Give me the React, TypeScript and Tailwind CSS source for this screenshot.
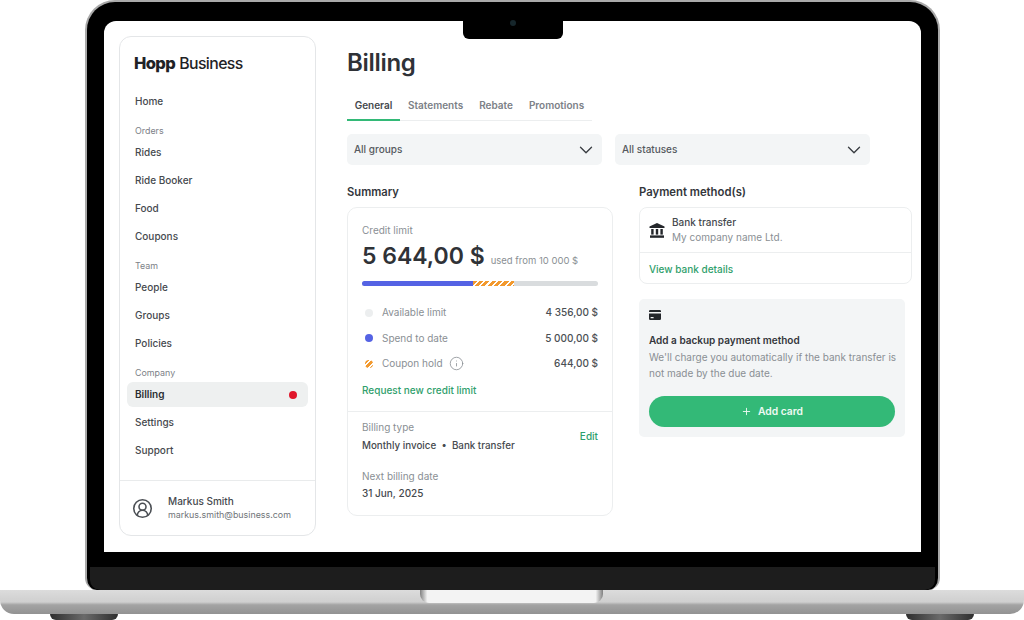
import { ChevronDown, Plus, Info, CircleUserRound } from 'lucide-react';

const NAV = [
  { items: ['Home'] },
  { label: 'Orders', items: ['Rides', 'Ride Booker', 'Food', 'Coupons'] },
  { label: 'Team', items: ['People', 'Groups', 'Policies'] },
  { label: 'Company', items: ['Billing', 'Settings', 'Support'] }
];

const STRIPES = 'bg-[repeating-linear-gradient(135deg,#f2992e_0,#f2992e_3px,#ffffff_3px,#ffffff_4.5px)]';

function BankIcon() {
  return (
    <svg viewBox="0 0 16 15" className="w-[16px] h-[15px] shrink-0" fill="#24272b">
      <path d="M8 0 15.5 3.6V5H.5V3.6L8 0Z" />
      <rect x="2.2" y="6" width="2.4" height="5.6" />
      <rect x="6.8" y="6" width="2.4" height="5.6" />
      <rect x="11.4" y="6" width="2.4" height="5.6" />
      <rect x="1" y="12.4" width="14" height="2.4" />
    </svg>
  );
}

function CardIcon() {
  return (
    <svg viewBox="0 0 12 10" className="w-[12px] h-[10px] block" fill="#24272b">
      <path d="M1.2 0h9.6A1.2 1.2 0 0 1 12 1.2V2H0v-.8A1.2 1.2 0 0 1 1.2 0Z" />
      <path d="M0 3.6h12v5.2A1.2 1.2 0 0 1 10.8 10H1.2A1.2 1.2 0 0 1 0 8.8V3.6Zm1.6 3.4v1.2h3V7h-3Z" fillRule="evenodd" />
    </svg>
  );
}

function Sidebar() {
  return (
    <aside className="w-[197px] h-[500px] shrink-0 flex flex-col border border-[#e4e6e8] rounded-[12px]">
      <div className="h-[52px] pl-[14px] pt-[15px] text-[16.5px] leading-[22px] tracking-[-0.6px] text-[#1f2226] whitespace-nowrap">
        <span className="font-extrabold">Hopp</span>{' '}
        <span className="font-medium text-[15.8px]">Business</span>
      </div>
      <nav className="flex-1 px-[7px]">
        {NAV.map((group) => (
          <div key={group.items[0]}>
            {group.label && (
              <div className="h-[23px] pl-[8px] pt-[7px] text-[8.9px] leading-[14px] text-[#7c8187]">{group.label}</div>
            )}
            <div className="flex flex-col gap-[3px] mb-[3px]">
              {group.items.map((item) => {
                const active = item === 'Billing';
                return (
                  <div
                    key={item}
                    className={`h-[25px] pl-[8px] pr-[11px] flex items-center justify-between rounded-[6px] text-[10px] ${
                      active ? 'bg-[#eef0f0] font-semibold text-[#2a2d31]' : 'font-medium text-[#45494e]'
                    }`}
                  >
                    {item}
                    {active && <span className="w-[8px] h-[8px] rounded-full bg-[#e0162b]" />}
                  </div>
                );
              })}
            </div>
          </div>
        ))}
      </nav>
      <div className="h-[55px] border-t border-[#e9ebec] flex items-center pl-[12px] gap-[15px]">
        <CircleUserRound className="w-[21px] h-[21px] text-[#4b4f54]" strokeWidth={1.8} />
        <div>
          <div className="text-[10px] leading-[14px] font-medium text-[#45494e]">Markus Smith</div>
          <div className="text-[8.9px] leading-[14px] text-[#6f7479]">markus.smith@business.com</div>
        </div>
      </div>
    </aside>
  );
}

function Select({ label }: { label: string }) {
  return (
    <div className="w-[255px] h-[31px] pl-[7px] pr-[5px] flex items-center justify-between bg-[#f3f5f6] rounded-[5px] text-[10px] font-medium text-[#55595e]">
      {label}
      <ChevronDown className="w-[22px] h-[22px] text-[#3c4045]" strokeWidth={1.5} />
    </div>
  );
}

function LimitRow({ dot, label, value, info }: { dot: string; label: string; value: string; info?: boolean }) {
  return (
    <div className="h-[25.5px] flex items-center text-[10px]">
      <span className={`w-[8px] h-[8px] rounded-full ml-[3px] mr-[9px] ${dot}`} />
      <span className="text-[#8a8f94]">{label}</span>
      {info && <Info className="w-[15px] h-[15px] ml-[6px] text-[#8a8f94]" strokeWidth={1.3} />}
      <span className="ml-auto font-medium text-[#4b4f54]">{value}</span>
    </div>
  );
}

function Summary() {
  return (
    <section className="w-[266px] shrink-0">
      <h2 className="h-[19px] text-[11.2px] leading-[19px] font-semibold text-[#33363b]">Summary</h2>
      <div className="mt-[5px] h-[309px] border border-[#eceeef] rounded-[10px]">
        <div className="px-[14px] pt-[15px] h-[204px] border-b border-[#eceeef]">
          <div className="text-[10px] leading-[14px] text-[#8a8f94]">Credit limit</div>
          <div className="mt-[3px] h-[32px] flex items-baseline gap-[6px] whitespace-nowrap">
            <span className="text-[23px] leading-[32px] font-semibold text-[#2f3237]">5 644,00 $</span>
            <span className="text-[9.5px] text-[#8a8f94]">used from 10 000 $</span>
          </div>
          <div className="mt-[9px] h-[5px] rounded-full bg-[#d9dcde] flex overflow-hidden">
            <div className="w-[111px] bg-[#5563e4]" />
            <div className={`w-[41px] ${STRIPES}`} />
          </div>
          <div className="mt-[14px]">
            <LimitRow dot="bg-[#eceeef]" label="Available limit" value="4 356,00 $" />
            <LimitRow dot="bg-[#5563e4]" label="Spend to date" value="5 000,00 $" />
            <LimitRow dot={STRIPES} label="Coupon hold" value="644,00 $" info />
          </div>
          <div className="mt-[6px] text-[10px] leading-[14px] font-medium text-[#2fa06c]">Request new credit limit</div>
        </div>
        <div className="px-[14px] pt-[8px] relative text-[10px]">
          <div className="leading-[15px] text-[#8a8f94]">Billing type</div>
          <div className="mt-[3px] leading-[15px] text-[9.8px] font-medium text-[#45494e]">Monthly invoice&nbsp; •&nbsp; Bank transfer</div>
          <div className="absolute right-[14px] top-[17px] font-medium text-[#2fa06c]">Edit</div>
          <div className="mt-[16px] leading-[15px] text-[#8a8f94]">Next billing date</div>
          <div className="mt-[2px] leading-[15px] font-medium text-[#45494e]">31 Jun, 2025</div>
        </div>
      </div>
    </section>
  );
}

function Payment() {
  return (
    <section className="w-[273px] shrink-0 ml-[26px]">
      <h2 className="h-[19px] text-[11.3px] leading-[19px] font-semibold text-[#33363b]">Payment method(s)</h2>
      <div className="mt-[5px] h-[77px] border border-[#eceeef] rounded-[8px]">
        <div className="h-[45px] border-b border-[#eceeef] flex items-center pl-[9px] gap-[7px]">
          <BankIcon />
          <div className="text-[10px] leading-[15.5px]">
            <div className="font-medium text-[#45494e]">Bank transfer</div>
            <div className="text-[#8a8f94]">My company name Ltd.</div>
          </div>
        </div>
        <div className="pl-[9px] pt-[9px] text-[10px] leading-[14px] font-medium text-[#2fa06c]">View bank details</div>
      </div>
      <div className="mt-[15px] w-[266px] h-[138px] bg-[#f3f5f6] rounded-[5px] pl-[10px] pr-[4px] pt-[11px]">
        <CardIcon />
        <div className="mt-[12px] text-[10px] leading-[16px] font-semibold text-[#33363b]">Add a backup payment method</div>
        <p className="mt-[1px] text-[10px] leading-[16px] text-[#8a8f94]">
          We'll charge you automatically if the bank transfer is not made by the due date.
        </p>
        <div className="mt-[15px] h-[31px] w-[246px] rounded-full bg-[#33b977] flex items-center justify-center gap-[6px] text-[10.3px] font-semibold text-[#eefaf3]">
          <Plus className="w-[11px] h-[11px]" strokeWidth={2} />
          Add card
        </div>
      </div>
    </section>
  );
}

function BillingPage() {
  return (
    <main className="flex-1 ml-[31px] min-w-0">
      <h1 className="h-[32px] mt-[11px] text-[24px] leading-[32px] font-semibold tracking-[-0.3px] text-[#2f3237]">Billing</h1>
      <div className="mt-[19px] w-[245px] h-[23px] border-b border-[#eceeef] flex text-[10px] font-semibold text-[#7c8187]">
        <div className="w-[53px] h-[23px] border-b-2 border-[#33b977] text-center text-[#45494e] leading-[15px]">General</div>
        <div className="ml-[8px] leading-[15px]">Statements</div>
        <div className="ml-[16px] leading-[15px]">Rebate</div>
        <div className="ml-[16px] leading-[15px]">Promotions</div>
      </div>
      <div className="mt-[13px] flex gap-[13px]">
        <Select label="All groups" />
        <Select label="All statuses" />
      </div>
      <div className="mt-[18px] flex">
        <Summary />
        <Payment />
      </div>
    </main>
  );
}

export default function App() {
  return (
    <div className="w-[1024px] h-[620px] overflow-hidden bg-white flex flex-col font-['Inter',sans-serif]">
      <div className="ml-[85px] w-[855px] h-[590px] shrink-0 relative rounded-t-[30px] rounded-b-[12px] border-2 border-b-0 border-[#a9a9a9] bg-black pt-[19px] px-[17px] flex flex-col">
        <div className="absolute left-[376px] top-0 w-[100px] h-[37px] bg-black rounded-b-[6px] flex items-center justify-center pt-[4px] z-10">
          <span className="w-[6px] h-[6px] rounded-full bg-[#16262b]" />
        </div>
        <div className="h-[531px] shrink-0 bg-white rounded-t-[12px] px-[15px] pt-[15px] flex overflow-hidden">
          <Sidebar />
          <BillingPage />
        </div>
        <div className="mt-[15px] flex-1 bg-[#1d1d1d] -mx-[14px] rounded-b-[10px]" />
      </div>
      <div className="h-[24px] shrink-0 relative rounded-b-[14px] bg-[linear-gradient(180deg,#dcdcdc_0%,#cfcfcf_50%,#a3a3a3_62%,#929292_100%)]">
        <div className="absolute left-[420px] top-0 w-[183px] h-[13px] rounded-b-[9px] bg-[linear-gradient(90deg,#808080,#f3f3f3_4%,#f3f3f3_96%,#808080)]" />
      </div>
      <div className="pl-[50px] pr-[50px] flex justify-between">
        <div className="w-[68px] h-[6px] rounded-b-[6px] bg-[linear-gradient(90deg,#2e2e2e,#6a6a6a,#2e2e2e)]" />
        <div className="w-[68px] h-[6px] rounded-b-[6px] bg-[linear-gradient(90deg,#2e2e2e,#6a6a6a,#2e2e2e)]" />
      </div>
    </div>
  );
}
